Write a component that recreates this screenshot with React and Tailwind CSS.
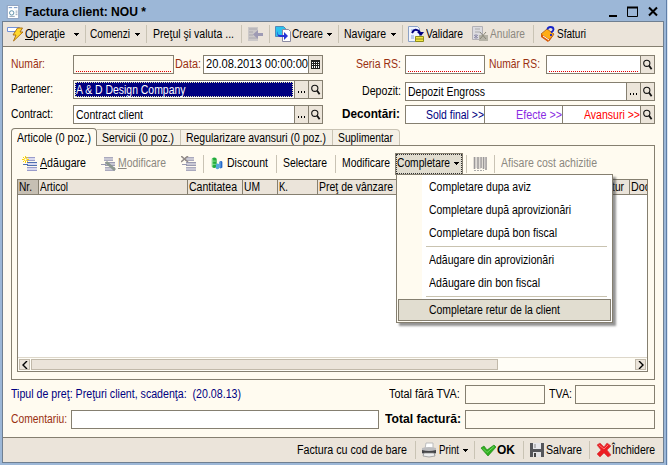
import React from "react";

const ctx = document.createElement("canvas").getContext("2d");

/* Single line of text condensed to the width of its slot. */
function T({ children, w, bold, size = 12, className = "", u = false }) {
  ctx.font = `${bold ? "bold " : ""}${size}px "Liberation Sans"`;
  const scale = w / ctx.measureText(children).width;
  return (
    <span className={`block shrink-0 whitespace-pre ${className}`} style={{ width: w }}>
      <span
        className={`inline-block origin-left ${bold ? "font-bold" : ""}`}
        style={{ transform: `scaleX(${scale})`, fontSize: size }}
      >
        {u ? <span className="underline underline-offset-1">{children[0]}</span> : children[0]}
        {children.slice(1)}
      </span>
    </span>
  );
}

const Sep = ({ className = "" }) => <i className={`block w-px h-[18px] shrink-0 bg-[#c9c3b4] ${className}`} />;

const Arrow = ({ className = "" }) => (
  <svg className={`shrink-0 ${className}`} width="5" height="3" viewBox="0 0 5 3" shapeRendering="crispEdges">
    <path d="M0 0h5v1H4v1H3v1H2V2H1V1H0z" />
  </svg>
);

function Icon({ children, className = "", size = 16 }) {
  return (
    <svg className={`shrink-0 ${className}`} width={size} height={size} viewBox="0 0 16 16" fill="none">
      {children}
    </svg>
  );
}

const Magnifier = () => (
  <svg width="11" height="12" viewBox="0 0 11 12" fill="none" stroke="#111">
    <circle cx="4.8" cy="4.3" r="3.1" strokeWidth="1.1" />
    <path d="M7 6.500l2.600 3.700" strokeWidth="1.8" />
  </svg>
);

const Btn = ({ children }) => (
  <span className="flex w-[14px] shrink-0 items-center justify-center border-l border-[#857f70] bg-[#ece5da]">{children}</span>
);
const Dots = () => (
  <Btn>
    <svg width="8" height="2" viewBox="0 0 8 2" className="mt-1" shapeRendering="crispEdges">
      <path d="M0 0h1v2H0zM3 0h1v2H3zM6 0h1v2H6z" />
    </svg>
  </Btn>
);
const Find = () => <Btn><Magnifier /></Btn>;

function Field({ className = "", children, required, bg = "bg-white" }) {
  return (
    <div className={`flex h-[19px] shrink-0 border border-[#857f70] ${bg} ${className}`}>
      {required && (
        <i className="mx-0.5 mb-px h-px flex-1 self-end bg-[repeating-linear-gradient(to_right,#e00000_0px,#e00000_1px,transparent_1px,transparent_2px)]" />
      )}
      {children}
    </div>
  );
}

const Lines = ({ fill, edge, mid }) => (
  <g shapeRendering="crispEdges">
    <path d="M4 1h9v4H4zM5 6h10v4H5zM5 11h10v4H5z" fill={fill} />
    <path d="M4 1h9v1H4zM4 4h9v1H4zM5 11h10v1H5zM5 14h10v1H5z" fill={edge} />
    <path d="M1 8h5v1H1zM5 6h10v1H5zM5 9h10v1H5z" fill={mid} />
  </g>
);

function TopBar() {
  return (
    <div className="flex h-[25px] shrink-0 items-center border-b border-[#857f70] bg-[#ebe4da] pl-1">
      <svg className="-mt-px shrink-0" width="17" height="16" viewBox="0 0 17 16" fill="none">
        <path d="M.5 1.500h12v4H.5z" fill="#fff" stroke="#7090d8" />
        <path d="M10.500 2h5l-2.500 4h3L6.500 15l2.500-6H6z" fill="#ffd82e" stroke="#a8690c" strokeWidth=".9" />
      </svg>
      <T w={40} u className="ml-px">Operaţie</T><Arrow className="ml-[9px]" />
      <Sep className="ml-1.5" /><T w={40} className="ml-1">Comenzi</T><Arrow className="ml-[5px]" />
      <Sep className="ml-1.5" /><T w={81} className="ml-1.5">Preţul şi valuta ...</T>
      <Sep className="ml-[7px]" />
      <Icon className="ml-[5px]">
        <path d="M1 1h10v14H1z" fill="#cbc8c8" />
        <path d="M2 3h8M2 6h4M2 9h4M2 12h8" stroke="#aaa8af" />
        <path d="M16 7v3h-5v3L6 8.500l5-4.500v3z" fill="#9e9bb4" />
      </Icon>
      <Sep className="ml-1.5" />
      <Icon className="ml-[5px]">
        <path d="M.5.5h8l2 2v8H.5z" fill="#2bc2ed" stroke="#5088b8" />
        <path d="M7.500 3.500h6l2 2v10h-8z" fill="#fff" stroke="#8b8ba2" />
        <path d="M3 5v3q0 1 2 1h4V6l4 4-4 4v-3H5q-4-1-2-6z" fill="#2636d5" />
      </Icon>
      <T w={31} className="ml-px">Creare</T><Arrow className="ml-1" />
      <Sep className="ml-1.5" /><T w={42} className="ml-[5px]">Navigare</T><Arrow className="ml-[5px]" />
      <Sep className="ml-1.5" />
      <Icon className="ml-[5px]">
        <path d="M.5.5h9l2 2v13H.5z" fill="#f2f5ff" stroke="#8ba1c6" />
        <path d="M3 4h3M3 10h3M3 12h3" stroke="#82a4db" />
        <path d="M4 7q3-6 8-1" stroke="#000080" strokeWidth="2" /><path d="M9 6h7l-3 4z" fill="#000080" />
        <path d="M7.500 10.500h8v5h-8z" fill="#f3e744" stroke="#8e8d19" /><path d="M8 13h7" stroke="#8e8d19" />
      </Icon>
      <T w={37} className="ml-0.5">Validare</T>
      <Icon className="ml-[9px]">
        <path d="M.5.5h10v13H.5z" fill="#dcdbe0" stroke="#b2b0b5" />
        <path d="M3 3h5M3 6h5" stroke="#aaa" /><path d="M4 8v5M2 9l4 3M6 9l-4 3" stroke="#8e8ca8" />
        <path d="M7 9h9v6H7z" fill="#b5b2a6" /><path d="M8 6l6 7M14 6l-6 7" stroke="#898678" />
      </Icon>
      <T w={35} className="ml-0.5 text-[#8b8880]">Anulare</T>
      <Sep className="ml-2" />
      <Icon className="ml-1.5">
        <path d="M1 8l6-5 7 5-5 7z" fill="#ffad16" stroke="#9c4b08" strokeWidth=".7" />
        <path d="M1 8v3l7 5 6-7-5 4z" fill="#d95a08" /><path d="M3 10l6 4" stroke="#fff" />
        <path d="M7.500 3.500q0-2.500 3-2.500t3 2.500q0 1.500-2.500 3M11 8v2" stroke="#1523c8" strokeWidth="1.800" />
      </Icon>
      <T w={29} className="ml-px">Sfaturi</T>
    </div>
  );
}

function Form() {
  return (
    <div className="flex h-[77px] shrink-0 pl-2 pt-2">
      <div className="flex w-[331px] shrink-0 flex-col gap-1.5">
        <div className="flex items-center text-[#9a3010]">
          <T w={34} className="mr-[28px]">Număr:</T>
          <Field required className="w-[101px]" bg="bg-[#fffbf0]" />
          <T w={26} className="ml-px mr-[2px]">Data:</T>
          <Field className="w-[120px] items-stretch text-black">
            <T w={102} className="ml-0.5 mr-auto leading-[17px]">20.08.2013 00:00:00</T>
            <Btn>
              <svg width="9" height="9" viewBox="0 0 9 9" shapeRendering="crispEdges">
                <path d="M0 0h9v9H0z" fill="#222" />
                <path d="M1 2h1v1H1zM3 2h1v1H3zM5 2h1v1H5zM7 2h1v1H7zM1 4h1v1H1zM3 4h1v1H3zM5 4h1v1H5zM7 4h1v1H7zM1 6h1v2H1zM3 6h1v2H3zM5 6h1v2H5zM7 6h1v2H7z" fill="#fff" />
              </svg>
            </Btn>
          </Field>
        </div>
        <div className="flex items-center">
          <T w={42} className="mr-[20px]">Partener:</T>
          <Field className="w-[250px]">
            <div className="my-px ml-px mr-px flex-1 border border-dotted border-[#e8e8b0] bg-[#000080] text-white"><T w={110} className="leading-[14px]">A &amp; D Design Company</T></div>
            <Dots /><Find />
          </Field>
        </div>
        <div className="flex items-center">
          <T w={42} className="mr-[20px]">Contract:</T>
          <Field className="w-[250px]">
            <T w={67} className="ml-0.5 mr-auto leading-[18px]">Contract client</T><Dots /><Find />
          </Field>
        </div>
      </div>
      <div className="flex w-[314px] shrink-0 flex-col">
        <div className="flex items-center text-[#9a3010]">
          <T w={45} className="ml-[14px] mr-[4px]">Seria RS:</T>
          <Field required className="w-[80px]" />
          <T w={51} className="ml-1 mr-[6px]">Număr RS:</T>
          <Field required className="w-[109px]"><Find /></Field>
        </div>
        <div className="mt-2 flex items-center">
          <T w={39} className="ml-[20px] mr-[4px]">Depozit:</T>
          <Field className="w-[250px]"><T w={77} className="ml-0.5 mr-auto leading-[18px]">Depozit Engross</T><Dots /><Find /></Field>
        </div>
        <div className="mt-1 flex items-center">
          <T w={58} bold className="mr-[5px]">Decontări:</T>
          <Field className="w-[250px] leading-[18px]">
            <div className="flex w-[78px] justify-end text-[#000080]"><T w={58}>{"Sold final >>"}</T></div>
            <div className="flex w-[78px] justify-end border-l border-[#857f70] text-[#8a2be2]"><T w={46}>{"Efecte >>"}</T></div>
            <div className="flex w-[78px] justify-end border-l border-[#857f70] text-[#ff0000]"><T w={56}>{"Avansuri >>"}</T></div>
            <Find />
          </Field>
        </div>
      </div>
    </div>
  );
}

const tabs = [
  ["Servicii (0 poz.)", 72, "w-[84px]"],
  ["Regularizare avansuri (0 poz.)", 140, "w-[152px]"],
  ["Suplimentar", 55, "w-[67px]"],
];

const columns = [
  ["Nr.", 13, "w-[21px] bg-[#c6bfb3]"],
  ["Articol", 28, "w-[149px]"],
  ["Cantitatea", 48, "w-[55px]"],
  ["UM", 16, "w-[35px]"],
  ["K.", 9, "w-[40px]"],
  ["Preţ de vânzare", 74, "w-[80px]"],
];

function ItemBar() {
  return (
    <div className="flex h-[21px] items-center pl-[10px]">
      <Icon>
        <Lines fill="#d9d9f0" edge="#9a9cca" mid="#4f6fb0" />
        <path d="M3.500 0v7M0 3.500h7M1 1l5 5M6 1L1 6" stroke="#ffd400" /><path d="M2.500 2.500h2v2h-2z" fill="#fff" />
      </Icon>
      <T w={46} u className="ml-0.5">Adăugare</T>
      <Icon className="ml-[14px]">
        <Lines fill="#c9c8d4" edge="#aaa9bd" mid="#9a9ab0" /><path d="M6 6l9 8" stroke="#8d9990" strokeWidth="3" />
      </Icon>
      <T w={48} u className="ml-0.5 text-[#8b8880]">Modificare</T>
      <Icon className="ml-[15px]">
        <Lines fill="#c9c8d4" edge="#aaa9bd" mid="#9a9ab0" /><path d="M0 0l7 6M7 0L0 6" stroke="#928b88" strokeWidth="1.600" />
      </Icon>
      <Sep className="ml-[6px]" />
      <Icon size={13} className="ml-[7px]">
        <path d="M1 2q3-3 6 0v10q-3 3-6 0z" fill="#20ab3c" /><path d="M2 2v10M1 5h5M1 9h5" stroke="#9ce79f" />
        <path d="M6 9q2-2 4 0v5q-2 2-4 0z" fill="#54a8d9" /><path d="M10 6q3-2 4 0v7q-2 2-4 0z" fill="#2468c9" /><path d="M11 6v7" stroke="#9bd1ff" />
      </Icon>
      <T w={41} className="ml-[3px]">Discount</T>
      <Sep className="ml-2" /><T w={44} className="ml-1.5">Selectare</T>
      <Sep className="ml-2" /><T w={48} className="ml-1.5">Modificare</T>
      <div className="ml-[5px] flex h-[22px] w-[68px] shrink-0 items-center border border-[#857f70] bg-[#e1ddd0]">
        <div className="flex h-5 w-full items-center border border-dotted border-[#333]"><T w={53}>Completare</T><Arrow className="ml-1" /></div>
      </div>
      <Sep className="ml-[3px]" />
      <Icon className="ml-[6px]">
        <path d="M1.500 1v12M5 1v12M8 1v11M10.500 1v12M13 1v13" stroke="#9b9899" strokeWidth="1.600" />
        <path d="M3 1v11M7 1v12M12 1v11" stroke="#c3c0c0" /><path d="M1 14.500h10" stroke="#aaa" strokeDasharray="2 1" />
      </Icon>
      <Sep className="ml-[5px]" /><T w={96} className="ml-1.5 text-[#8b8880]">Afisare cost achizitie</T>
    </div>
  );
}

function Grid() {
  return (
    <div className="ml-[5px] mr-[6px] mt-[5px] flex h-[193px] flex-col overflow-hidden border border-[#857f70] bg-white">
      <div className="flex h-[15px] shrink-0 border-b border-[#857f70] bg-[#ebe4da] leading-[14px]">
        {columns.map(([name, w, cls]) => (
          <div key={name} className={`shrink-0 border-r border-[#857f70] pl-px ${cls}`}><T w={w}>{name}</T></div>
        ))}
        <div className="flex w-[232px] shrink-0 justify-end border-r border-[#857f70] pr-[5px]"><T w={25}>Retur</T></div>
        <T w={19} className="ml-px">Doc</T>
      </div>
      <div className="flex-1" />
      <div className="flex h-[14px] shrink-0 items-center border-t border-[#ddd7ca] bg-[#fffdf6] px-px">
        <ScrollBtn d="M5 0L1 4l4 4" />
        <i className="ml-px h-[11px] w-[467px] border border-[#c1b9aa] bg-[#ebe4da]" />
        <span className="flex-1" />
        <ScrollBtn d="M1 0l4 4-4 4" />
      </div>
    </div>
  );
}
const ScrollBtn = ({ d }) => (
  <span className="flex h-[11px] w-[11px] items-center justify-center border border-[#c1b9aa] bg-[#ebe4da]">
    <svg width="6" height="8" viewBox="0 0 6 8" fill="none"><path d={d} stroke="#000" strokeWidth="1.400" /></svg>
  </span>
);

const MenuItem = ({ w, children }) => <div className="flex h-[23px] items-center pl-[32px]"><T w={w}>{children}</T></div>;
const MenuSep = () => <div className="h-1 pl-[29px] pr-[5px] pt-px"><i className="block h-px bg-[#c9c3b0]" /></div>;

function Menu() {
  return (
    <div className="absolute left-[396px] top-[174px] h-[149px] w-[217px] border border-[#857f70] bg-[linear-gradient(to_right,#fffbf0_25px,#fff_25px)] pt-px shadow-[3px_3px_2px_rgba(60,60,60,0.55)]">
      <MenuItem w={102}>Completare dupa aviz</MenuItem>
      <MenuItem w={142}>Completare după aprovizionări</MenuItem>
      <MenuItem w={128}>Completare după bon fiscal</MenuItem>
      <MenuSep />
      <MenuItem w={125}>Adăugare din aprovizionări</MenuItem>
      <MenuItem w={111}>Adăugare din bon fiscal</MenuItem>
      <MenuSep />
      <div className="mx-px flex h-[22px] items-center border border-[#857f70] bg-[#e1ddd0] pl-[30px]"><T w={131}>Completare retur de la client</T></div>
    </div>
  );
}

function Footer() {
  return (
    <div className="flex h-[25px] shrink-0 items-center border-t border-[#857f70] bg-[#ebe4da] pl-[294px]">
      <T w={110}>Factura cu cod de bare</T><Sep className="ml-2" />
      <Icon className="ml-[5px]">
        <path d="M5 1h7v6H4z" fill="#fff" stroke="#bbb" /><path d="M1 6q7-2 14 0v6q-7 3-14 0z" fill="#bdbdbf" />
        <path d="M1 8q7 2 14 0v3q-7 2-14 0z" fill="#454548" /><path d="M3 11h10l1 3q-6 2-12 0z" fill="#eee" stroke="#888" strokeWidth=".7" />
      </Icon>
      <T w={20} className="ml-0.5">Print</T><Arrow className="ml-1" /><Sep className="ml-[6px]" />
      <Icon className="ml-[5px]"><path d="M1 6l3-2 3 4 7-5 2 2-8 9z" fill="#2fae1f" stroke="#218c18" strokeWidth=".7" /><path d="M3 6.500l4 4 7-6" stroke="#6fd65f" /></Icon>
      <T w={18} bold size={13} className="ml-px mr-[2px]">OK</T><Sep className="ml-[6px]" />
      <Icon className="ml-[5px]">
        <path d="M1 1h14v14H1z" fill="#55565a" /><path d="M4 1h8v6H4z" fill="#e8e8ec" /><path d="M4 10h8v5H4z" fill="#e3e3e5" /><path d="M5 11h2v4H5z" fill="#444" /><path d="M6 2v4" stroke="#888" />
      </Icon>
      <T w={36} className="ml-px">Salvare</T><Sep className="ml-[7px]" />
      <Icon className="ml-[6px]">
        <path d="M1 3l3-2 4 4 3-4 4 3-4 4 4 5-3 2-4-4-4 4-3-3 4-4z" fill="#ec1d22" stroke="#d2474b" strokeWidth=".7" /><path d="M3 3l5 4 4-4" stroke="#ff7070" />
      </Icon>
      <T w={43}>Închidere</T>
    </div>
  );
}

export default function App() {
  return (
    <div className="relative flex h-[465px] w-[668px] overflow-hidden bg-[#9cb7d7] font-['Liberation_Sans',sans-serif] text-[12px] leading-[15px] text-black">
      <div className="flex w-[666px] flex-col pl-[2px] pr-[2px]">
        <div className="flex h-[21px] shrink-0 items-center pl-[4px] pt-0.5">
          <Icon size={14}>
            <path d="M1.500.5h13v15h-13z" fill="#fff" stroke="#8598b8" /><path d="M3 3h4M9 3h4" stroke="#5d83bb" />
            <circle cx="6.500" cy="9" r="2.500" stroke="#4d83a0" /><path d="M11 7h2M11 9h2M11 11h2M4 13h6" stroke="#8899aa" />
          </Icon>
          <T w={121} bold size={13} className="ml-[5px]">Factura client: NOU *</T>
          <svg className="ml-auto mr-[6px]" width="50" height="12" viewBox="0 0 50 12" fill="none" stroke="#000">
            <path d="M1 10h8" strokeWidth="2" /><path d="M19.500 1.500h10v9h-10z" /><path d="M19 1.500h11M41 1.500l8 8M49 1.500l-8 8" strokeWidth="2" />
          </svg>
        </div>
        <div className="flex h-[442px] shrink-0 flex-col border border-[#6f7f91] bg-[#fffbf0]">
          <TopBar />
          <Form />
          <div className="ml-[8px] flex h-[21px] shrink-0 items-end">
            <div className="z-10 -mb-px flex h-[18px] w-[86px] shrink-0 items-center rounded-t-sm border border-b-0 border-[#857f70] bg-[#fffbf0] pl-[5px] pt-0.5"><T w={74}>Articole (0 poz.)</T></div>
            {tabs.map(([name, w, cls]) => (
              <div key={name} className={`flex h-[16px] shrink-0 items-center border border-b-0 border-l-0 border-[#c9c3b4] bg-[#f5f0e6] pl-[5px] pt-0.5 last:rounded-tr-sm ${cls}`}><T w={w}>{name}</T></div>
            ))}
          </div>
          <div className="ml-[8px] mr-[8px] h-[235px] shrink-0 border border-[#857f70] pt-[7px]">
            <ItemBar />
            <Grid />
          </div>
          <div className="flex flex-1 flex-col gap-1.5 pl-[8px] pt-[5px]">
            <div className="flex items-center">
              <T w={230} className="text-[#000080]">Tipul de preţ: Preţuri client, scadenţa:  (20.08.13)</T>
              <T w={71} className="ml-[148px] mr-[5px]">Total fără TVA:</T>
              <Field className="w-[80px]" bg="bg-[#fffbf0]" />
              <T w={23} className="ml-[4px] mr-[3px]">TVA:</T>
              <Field className="w-[80px]" bg="bg-[#fffbf0]" />
            </div>
            <div className="flex items-center">
              <T w={56} className="mr-[4px] text-[#9a3010]">Comentariu:</T>
              <Field className="w-[308px]" />
              <T w={76} bold className="ml-[6px] mr-[4px]">Total factură:</T>
              <Field className="w-[190px]" bg="bg-[#fffbf0]" />
            </div>
          </div>
          <Footer />
        </div>
      </div>
      <div className="w-[2px] border-l border-[#5f7fa8] bg-[#dce6f2]" />
      <Menu />
    </div>
  );
}
